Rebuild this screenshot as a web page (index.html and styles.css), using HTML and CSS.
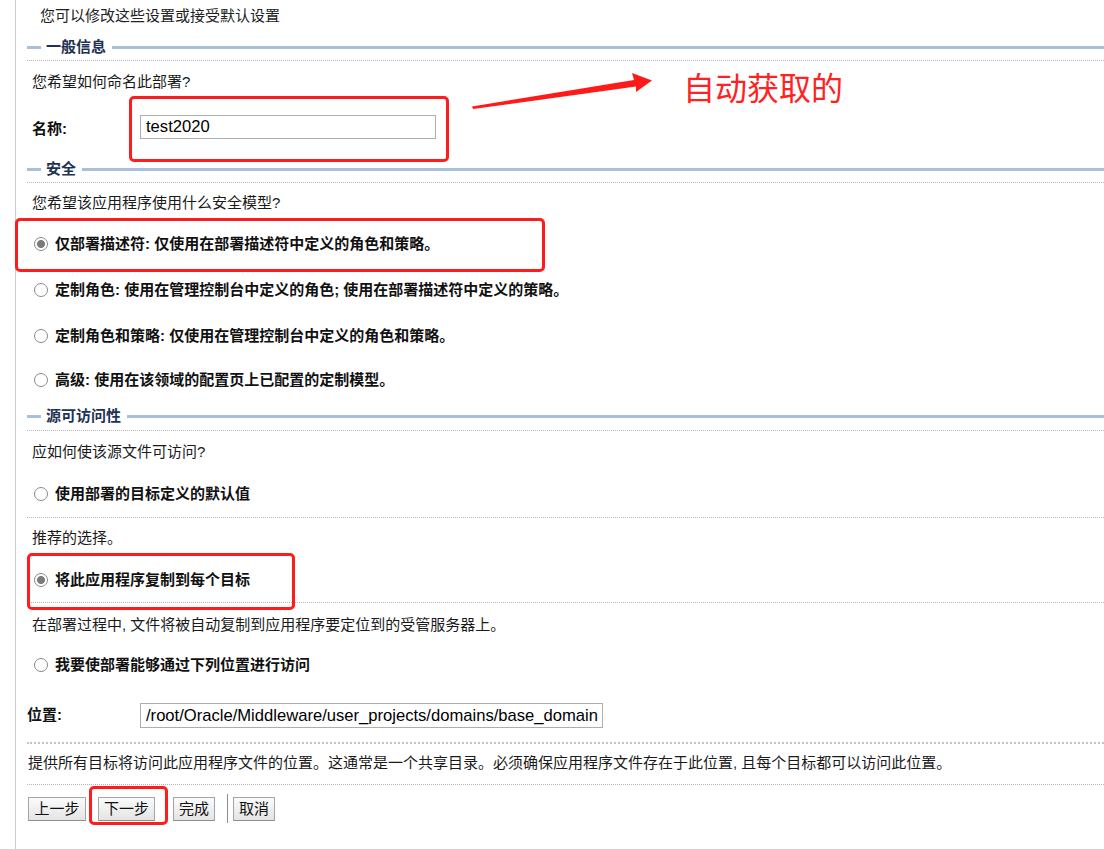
FILE: index.html
```html
<!DOCTYPE html>
<html lang="zh-CN">
<head>
<meta charset="utf-8">
<title>部署设置</title>
<link rel="stylesheet" href="styles.css">
</head>
<body>
<div class="page">
  <p class="intro">您可以修改这些设置或接受默认设置</p>

  <div class="sec-head h1"><span class="sec-title">一般信息</span></div>
  <div class="dots d1"></div>
  <p class="q q1">您希望如何命名此部署?</p>
  <div class="field name-row">
    <label class="field-label name-label">名称:</label>
    <input class="text-input name-input" type="text" value="test2020">
  </div>

  <div class="sec-head h2"><span class="sec-title">安全</span></div>
  <div class="dots d1"></div>
  <p class="q q2">您希望该应用程序使用什么安全模型?</p>
  <label class="radio-row r1"><input type="radio" name="sec" checked><span>仅部署描述符: 仅使用在部署描述符中定义的角色和策略。</span></label>
  <label class="radio-row r2"><input type="radio" name="sec"><span>定制角色: 使用在管理控制台中定义的角色; 使用在部署描述符中定义的策略。</span></label>
  <label class="radio-row r2"><input type="radio" name="sec"><span>定制角色和策略: 仅使用在管理控制台中定义的角色和策略。</span></label>
  <label class="radio-row r4"><input type="radio" name="sec"><span>高级: 使用在该领域的配置页上已配置的定制模型。</span></label>

  <div class="sec-head h3"><span class="sec-title">源可访问性</span></div>
  <div class="dots d3"></div>
  <p class="q q3">应如何使该源文件可访问?</p>
  <label class="radio-row r5"><input type="radio" name="src"><span>使用部署的目标定义的默认值</span></label>
  <div class="dots d4"></div>
  <p class="q q4">推荐的选择。</p>
  <label class="radio-row r6"><input type="radio" name="src" checked><span>将此应用程序复制到每个目标</span></label>
  <div class="dots d5"></div>
  <p class="q q5">在部署过程中, 文件将被自动复制到应用程序要定位到的受管服务器上。</p>
  <label class="radio-row r7"><input type="radio" name="src"><span>我要使部署能够通过下列位置进行访问</span></label>
  <div class="field loc-row">
    <label class="field-label loc-label">位置:</label>
    <input class="text-input loc-input" type="text" value="/root/Oracle/Middleware/user_projects/domains/base_domain">
  </div>
  <div class="dots d6"></div>
  <p class="q q6">提供所有目标将访问此应用程序文件的位置。这通常是一个共享目录。必须确保应用程序文件存在于此位置, 且每个目标都可以访问此位置。</p>
  <div class="dots d7"></div>
  <div class="buttons">
    <button class="btn b-prev" type="button">上一步</button>
    <button class="btn b-next" type="button">下一步</button>
    <button class="btn b-done" type="button">完成</button>
    <span class="btn-sep"></span>
    <button class="btn b-cancel" type="button">取消</button>
  </div>
</div>

<div class="mark mark-name"></div>
<div class="mark mark-sec"></div>
<div class="mark mark-copy"></div>
<div class="mark mark-next"></div>
<svg class="arrow" width="200" height="50" viewBox="460 65 200 50" aria-hidden="true">
  <polygon points="472,106.5 634,80 632,73 652,80.5 636,92 636,86.5 473,109" fill="#ff1a1a"/>
</svg>
<div class="note">自动获取的</div>
</body>
</html>
```

FILE: styles.css
```css
html, body {
  margin: 0;
  padding: 0;
  background: #ffffff;
}
body {
  font-family: "Liberation Sans", "Noto Sans CJK SC", sans-serif;
  font-size: 15px;
  color: #111111;
  position: relative;
  width: 1104px;
  height: 849px;
  overflow: hidden;
}
.page {
  margin-left: 15px;
  border-left: 1px solid #cccccc;
  padding-left: 11px;
  height: 849px;
  box-sizing: border-box;
  padding-top: 6px;
}
p { margin: 0; }
.intro {
  line-height: 20px;
  padding-left: 13px;
  color: #222;
}
.sec-head {
  display: flex;
  align-items: center;
  height: 20px;
  line-height: 20px;
}
.sec-head::before {
  content: "";
  width: 14px;
  height: 3px;
  background: #a9c0dc;
  margin-right: 5px;
}
.sec-head::after {
  content: "";
  flex: 1;
  height: 3px;
  background: #a9c0dc;
  margin-left: 6px;
}
.sec-title {
  font-weight: bold;
  color: #1e3253;
}
.h1 { margin-top: 11px; }
.h2 { margin-top: 20px; }
.h3 { margin-top: 16px; }
.dots {
  border-top: 1px dotted #b8b8b8;
  height: 0;
}
.d1 { margin-top: 3px; }
.d3 { margin-top: 4px; }
.d4 { margin-top: 13px; }
.d5 { margin-top: 12px; }
.d6 { margin-top: 14px; border-top: 2px dotted #c4c4c4; }
.d7 { margin-top: 11px; }

.q {
  line-height: 20px;
  padding-left: 5px;
  color: #1a1a1a;
}
.q1 { margin-top: 11px; }
.q2 { margin-top: 10px; }
.q3 { margin-top: 11px; }
.q4 { margin-top: 10px; }
.q5 { margin-top: 12px; }
.q6 { margin-top: 9px; padding-left: 1px; }

.field {
  display: flex;
  align-items: center;
  height: 24px;
}
.field-label {
  font-weight: bold;
  color: #111;
}
.name-row { margin-top: 23px; }
.name-label { width: 108px; padding-left: 5px; }
.loc-row { margin-top: 28px; height: 25px; }
.loc-label { width: 113px; padding-left: 0; margin-top: -4px; }
.text-input {
  box-sizing: border-box;
  height: 100%;
  border: 1px solid #adadad;
  padding: 0 5px;
  font-family: "Liberation Sans", Arial, sans-serif;
  font-size: 16.6px;
  color: #000;
  background: #fff;
  margin: 0;
  outline: none;
}
.name-input { width: 296px; }
.loc-input { width: 463px; padding-left: 5px; padding-right: 0; }

.radio-row {
  display: flex;
  align-items: center;
  line-height: 20px;
  height: 20px;
  font-weight: bold;
  color: #111;
  padding-left: 7px;
}
.radio-row input {
  appearance: none;
  -webkit-appearance: none;
  width: 14px;
  height: 14px;
  margin: 0 7px 0 0;
  border: 1px solid #8a8a8a;
  border-radius: 50%;
  background: #ffffff;
  box-sizing: border-box;
  flex: none;
}
.radio-row input:checked {
  background: radial-gradient(circle, #7b7b7b 0, #7b7b7b 3.6px, #ffffff 4.4px);
}
.r1 { margin-top: 21px; }
.r2 { margin-top: 26px; }
.r4 { margin-top: 24px; }
.r5 { margin-top: 22px; }
.r6 { margin-top: 22px; }
.r7 { margin-top: 20px; }

.buttons {
  display: flex;
  align-items: center;
  margin-top: 9px;
  padding-left: 1px;
}
.btn {
  height: 24px;
  box-sizing: border-box;
  padding: 0 5px;
  border: 1px solid #a5a5a5;
  border-bottom-color: #8f8f8f;
  background: linear-gradient(#fbfbfb, #e4e4e4);
  font-family: "Liberation Sans", "Noto Sans CJK SC", sans-serif;
  font-size: 15px;
  color: #111;
  line-height: 20px;
  margin: 0;
  border-radius: 0;
}
.b-prev { width: 58px; }
.b-next { width: 57px; margin-left: 12px; }
.b-done { width: 42px; margin-left: 18px; }
.btn-sep {
  width: 1px;
  height: 29px;
  background: #8c8c8c;
  margin-left: 12px;
  margin-right: 5px;
}
.b-cancel { width: 42px; }

.mark {
  position: absolute;
  border: 3px solid #ff1c1c;
  border-radius: 5px;
  box-sizing: border-box;
}
.mark-name { left: 129px; top: 96px; width: 320px; height: 66px; }
.mark-sec { left: 15px; top: 218px; width: 530px; height: 54px; }
.mark-copy { left: 27px; top: 553px; width: 268px; height: 57px; }
.mark-next { left: 89px; top: 786px; width: 79px; height: 39px; }
.arrow {
  position: absolute;
  left: 460px;
  top: 65px;
}
.note {
  position: absolute;
  left: 683px;
  top: 66px;
  font-family: "Noto Sans CJK SC", sans-serif;
  font-size: 32px;
  line-height: 40px;
  color: #ff2222;
  font-weight: 400;
}
```
